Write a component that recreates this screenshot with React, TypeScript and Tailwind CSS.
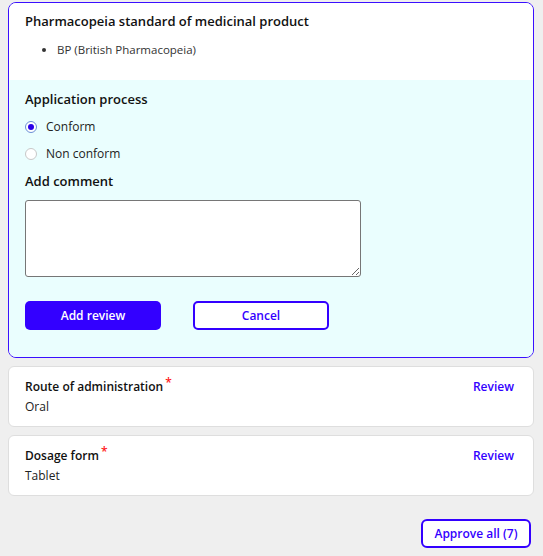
import React, { useState } from 'react';

const font = { fontFamily: '"Open Sans", "Noto Sans", sans-serif' };

type Field = { label: string; value: string };

const fields: Field[] = [
    { label: 'Route of administration', value: 'Oral' },
    { label: 'Dosage form', value: 'Tablet' },
];

const Radio: React.FC<{ checked: boolean; label: string; onClick: () => void }> = ({ checked, label, onClick }) => (
    <button onClick={onClick} className="flex items-center gap-[9px] text-[12px] text-[#222]">
        <span
            className={`w-[12px] h-[12px] rounded-full border flex items-center justify-center bg-white ${
                checked ? 'border-[#6b8fd6]' : 'border-[#c8c8c8]'
            }`}
        >
            {checked && <span className="w-[6px] h-[6px] rounded-full bg-[#2a00e8]" />}
        </span>
        {label}
    </button>
);

export default function App() {
    const [choice, setChoice] = useState('conform');

    return (
        <div style={font} className="bg-[#efefef] min-h-[556px] w-[543px] px-[8px] pt-[2px] pb-[8px]">
            {/* Карточка с активной проверкой */}
            <div className="w-[526px] rounded-[8px] border border-[#3a10ff] overflow-hidden">
                <div className="bg-white px-[16px] pt-[9px] pb-[22px]">
                    <h3 className="text-[13px] font-semibold text-[#111] leading-[18px]">
                        Pharmacopeia standard of medicinal product
                    </h3>
                    <ul className="list-disc pl-[32px] mt-[12px] text-[11.5px] text-[#333] leading-[16px]">
                        <li>BP (British Pharmacopeia)</li>
                    </ul>
                </div>
                <div className="bg-[#eafefe] px-[16px] pt-[10px] pb-[27px]">
                    <h4 className="text-[13px] font-semibold text-[#111] leading-[18px]">Application process</h4>
                    <div className="flex flex-col gap-[9px] mt-[10px]">
                        <Radio checked={choice === 'conform'} label="Conform" onClick={() => setChoice('conform')} />
                        <Radio checked={choice === 'non'} label="Non conform" onClick={() => setChoice('non')} />
                    </div>
                    <h4 className="text-[13px] font-semibold text-[#111] leading-[18px] mt-[9px]">Add comment</h4>
                    <textarea className="block mt-[10px] w-[336px] h-[77px] bg-white border border-[#767676] rounded-[3px]" />
                    <div className="flex gap-[32px] mt-[24px]">
                        <button className="w-[136px] h-[29px] rounded-[5px] bg-[#3300ff] text-white text-[12px] font-semibold">
                            Add review
                        </button>
                        <button className="w-[136px] h-[29px] rounded-[5px] border-2 border-[#3300ff] bg-white text-[#3300ff] text-[12px] font-semibold">
                            Cancel
                        </button>
                    </div>
                </div>
            </div>

            {/* Остальные поля */}
            <div className="flex flex-col gap-[8px] mt-[8px]">
                {fields.map((f) => (
                    <div
                        key={f.label}
                        className="w-[526px] bg-white border border-[#dedede] rounded-[6px] px-[16px] pt-[11px] pb-[10px] flex justify-between items-start"
                    >
                        <div>
                            <div className="text-[12px] font-semibold text-[#111] leading-[18px]">
                                {f.label}
                                <span className="text-[#ff1a1a] ml-[2px] relative top-[-4px]">*</span>
                            </div>
                            <div className="text-[12px] text-[#222] leading-[18px] mt-[2px]">{f.value}</div>
                        </div>
                        <button className="text-[12px] font-semibold text-[#3300ff] leading-[18px] mr-[3px]">
                            Review
                        </button>
                    </div>
                ))}
            </div>

            <div className="flex justify-end mt-[23px] pr-[4px]">
                <button className="w-[110px] h-[29px] rounded-[6px] border-2 border-[#3300ff] bg-white text-[#3300ff] text-[12px] font-semibold">
                    Approve all (7)
                </button>
            </div>
        </div>
    );
}
